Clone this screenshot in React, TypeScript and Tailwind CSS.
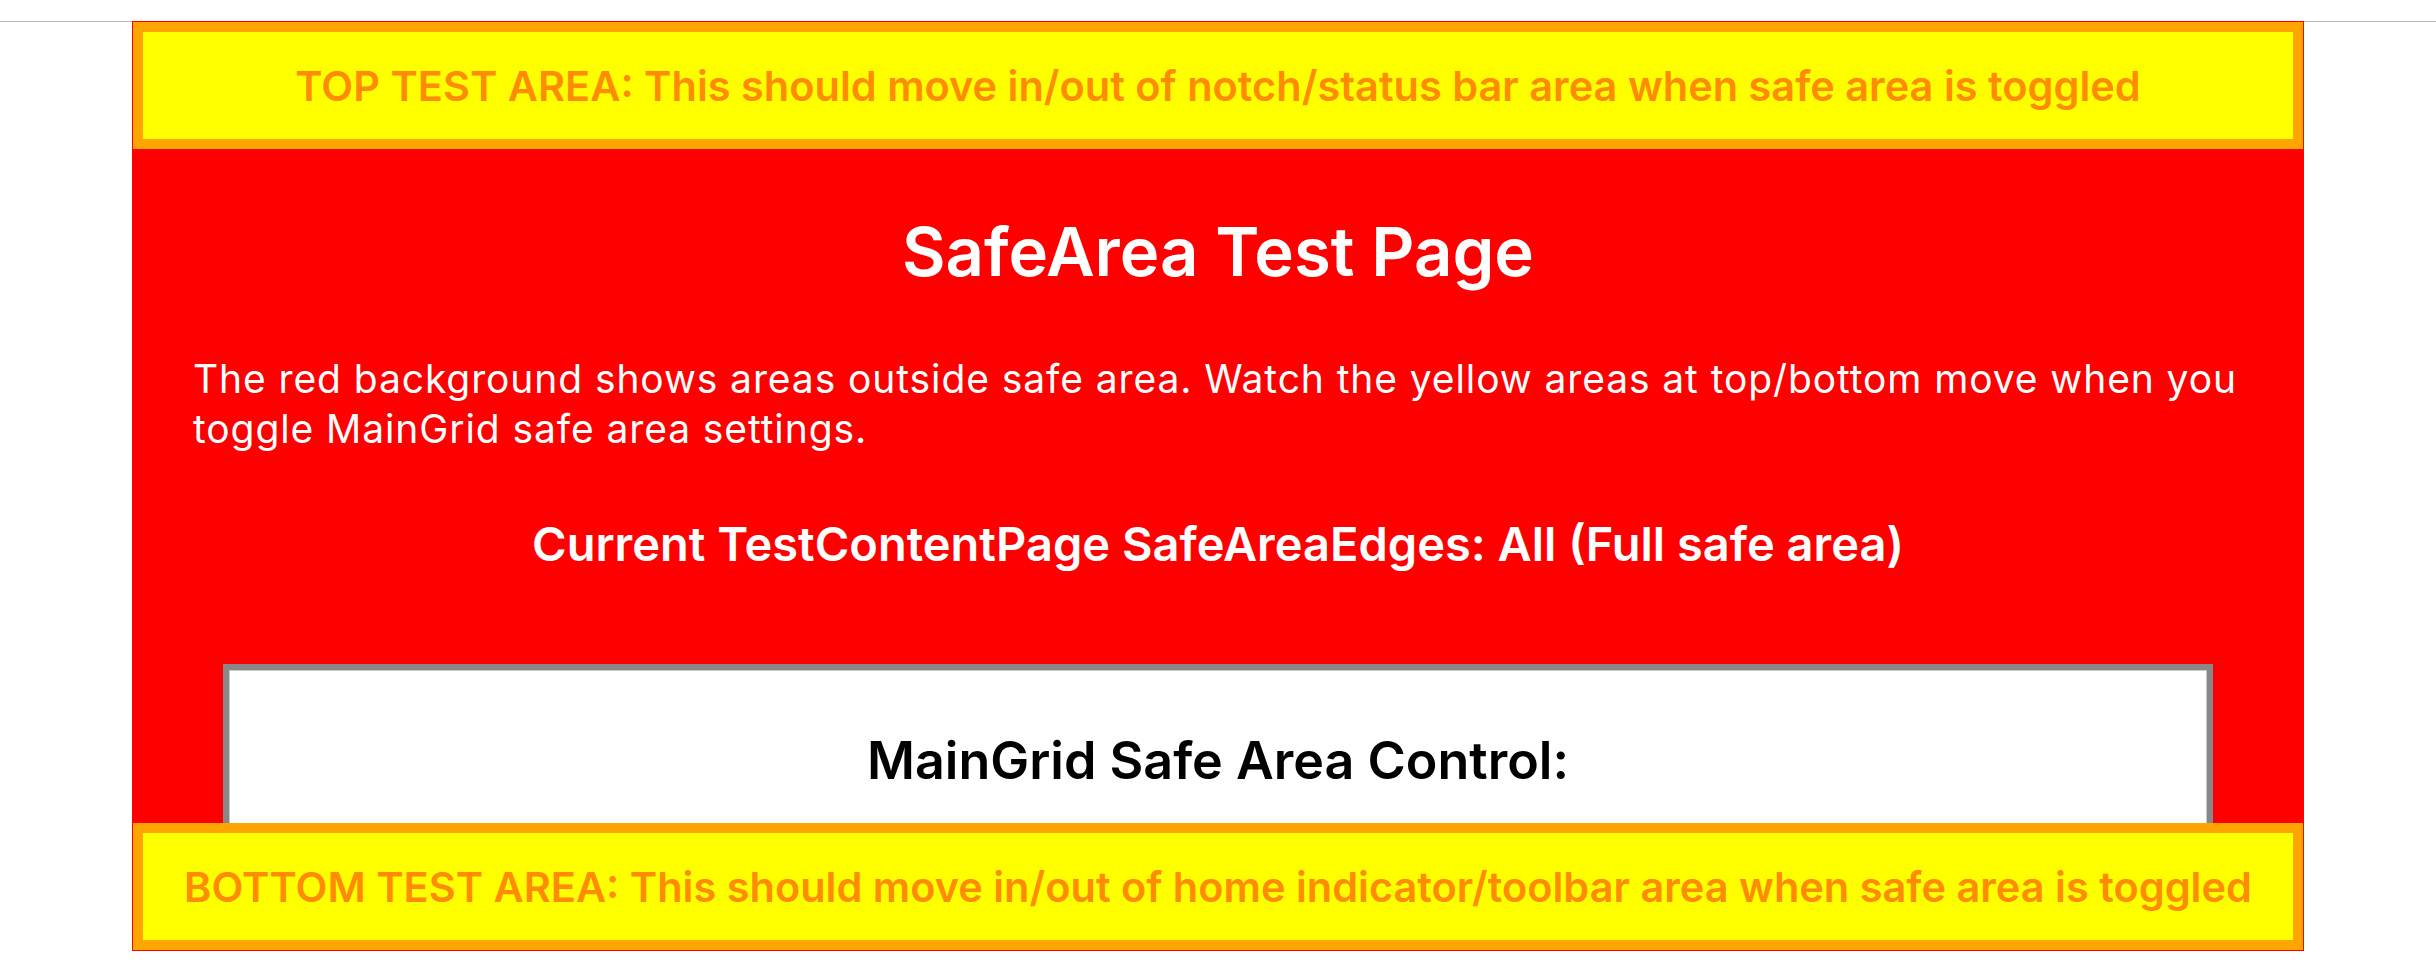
import React from 'react';

const edgeBox =
  "h-[127px] flex items-center justify-center bg-[#ffff00] border-[10px] border-[#ffa500] text-[#ff8c00] text-[41.5px] font-semibold leading-[48px] whitespace-nowrap";

export default function App() {
  return (
    <div className="min-h-[974px] bg-white font-['Inter','Noto_Sans',sans-serif]">
      <div className="h-[21px]" />
      <div className="border-t border-[#b8b8b8]">
        <div className="relative mx-auto -mt-px w-[2172px] h-[930px] overflow-hidden bg-[#ff0000] border border-[#ff0000]">
          {/* top safe-area marker */}
          <div className={edgeBox}>
            TOP TEST AREA: This should move in/out of notch/status bar area when safe area is toggled
          </div>

          <div className="px-[60px]">
            <h1 className="mt-[61px] text-center text-[67px] leading-[84px] font-semibold text-white">
              SafeArea Test Page
            </h1>
            <p className="mt-[60px] text-[39px] leading-[50px] tracking-[0.9px] text-white">
              The red background shows areas outside safe area. Watch the yellow areas at top/bottom move when you
              toggle MainGrid safe area settings.
            </p>
            <p className="mt-[62px] text-center text-[47px] leading-[56px] font-semibold text-white">
              Current TestContentPage SafeAreaEdges: All (Full safe area)
            </p>
          </div>

          <div className="mx-[90px] mt-[92px] min-h-[600px] bg-white border-[6px] border-[#888888] shadow-[inset_0_0_0_1px_#c8c8c8]">
            <h2 className="mt-[58px] text-center text-[52px] leading-[66px] font-semibold text-black">
              MainGrid Safe Area Control:
            </h2>
          </div>

          <div className={`absolute left-0 right-0 bottom-0 ${edgeBox}`}>
            BOTTOM TEST AREA: This should move in/out of home indicator/toolbar area when safe area is toggled
          </div>
        </div>
      </div>
    </div>
  );
}
